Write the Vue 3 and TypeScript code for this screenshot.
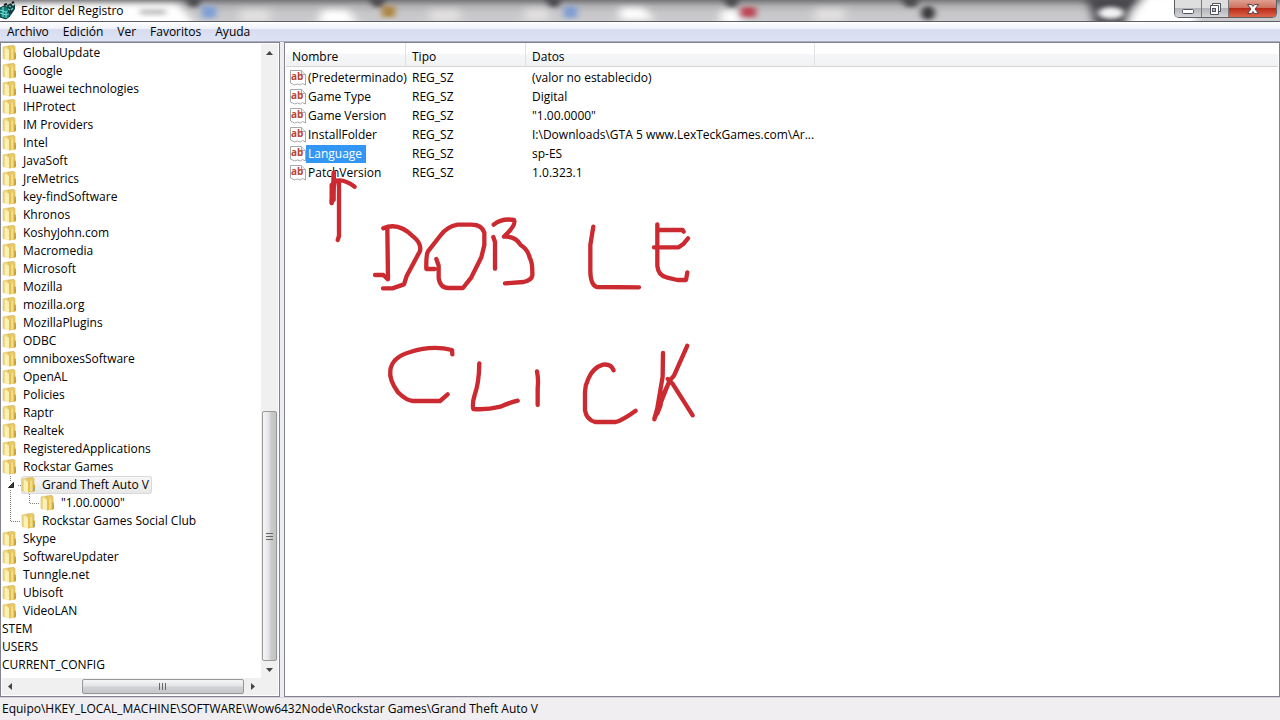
<script setup lang="ts">
import { ref } from 'vue'

interface Node {
  name: string
  kind: 'key' | 'child' | 'grandchild' | 'last' | 'cut'
}

const key = (name: string): Node => ({ name, kind: 'key' })

const nodes: Node[] = [
  ...['GlobalUpdate', 'Google', 'Huawei technologies', 'IHProtect', 'IM Providers', 'Intel', 'JavaSoft',
    'JreMetrics', 'key-findSoftware', 'Khronos', 'KoshyJohn.com', 'Macromedia', 'Microsoft', 'Mozilla',
    'mozilla.org', 'MozillaPlugins', 'ODBC', 'omniboxesSoftware', 'OpenAL', 'Policies', 'Raptr', 'Realtek',
    'RegisteredApplications', 'Rockstar Games'].map(key),
  { name: 'Grand Theft Auto V', kind: 'child' },
  { name: '"1.00.0000"', kind: 'grandchild' },
  { name: 'Rockstar Games Social Club', kind: 'last' },
  ...['Skype', 'SoftwareUpdater', 'Tunngle.net', 'Ubisoft', 'VideoLAN'].map(key),
  { name: 'STEM', kind: 'cut' },
  { name: 'USERS', kind: 'cut' },
  { name: 'CURRENT_CONFIG', kind: 'cut' },
]

const menus = ['Archivo', 'Edición', 'Ver', 'Favoritos', 'Ayuda']

const values = [
  { name: '(Predeterminado)', data: '(valor no establecido)' },
  { name: 'Game Type', data: 'Digital' },
  { name: 'Game Version', data: '"1.00.0000"' },
  { name: 'InstallFolder', data: 'I:\\Downloads\\GTA 5 www.LexTeckGames.com\\Ar...' },
  { name: 'Language', data: 'sp-ES' },
  { name: 'PatchVersion', data: '1.0.323.1' },
]

const openKey = ref('Grand Theft Auto V')
const selected = ref('Language')
</script>

<template>
  <div class="window">
    <header class="titlebar">
      <svg class="glass" viewBox="0 0 1280 21" preserveAspectRatio="none" aria-hidden="true">
        <defs>
          <linearGradient id="glassFill" x1="0" y1="0" x2="0" y2="1">
            <stop offset="0" stop-color="#77777a" />
            <stop offset=".3" stop-color="#b2b2b4" />
            <stop offset=".6" stop-color="#c6c6c8" />
            <stop offset="1" stop-color="#cbcbcd" />
          </linearGradient>
          <filter id="soft" x="-10%" y="-50%" width="120%" height="200%"><feGaussianBlur stdDeviation="5 3" /></filter>
          <filter id="softer" x="-50%" y="-50%" width="200%" height="200%"><feGaussianBlur stdDeviation="3 2" /></filter>
        </defs>
        <rect width="1280" height="21" fill="url(#glassFill)" />
        <g filter="url(#soft)">
          <path d="M-20 4H178L200 30H-20Z" fill="#fff" />
          <path d="M322 10h26l10 14h-40zM620 8h24l10 12h-34zM722 10h14l8 14h-24zM1146-6h50v34h-72z" fill="#fff" />
          <path d="M240 10h30v12h-30zM430 10h30v12h-30zM525 9h24v12h-24zM815 9h30v12h-30z" fill="#e2e0e0" />
          <path d="M1085-4h60l-14 14-4 16h-32l-4-16z" fill="#46464b" />
        </g>
        <g filter="url(#softer)">
          <path d="M184-4h18l-4 11h-8zM368-4h18l-4 11h-8zM544-4h18l-4 11h-8zM722-4h18l-4 11h-8zM900-4h20l-4 11h-10z" fill="#4c4c50" />
          <rect x="202" y="6" width="14" height="12" fill="#7f9fd6" />
          <rect x="382" y="6" width="13" height="11" fill="#ad8540" />
          <rect x="564" y="6" width="13" height="12" fill="#7f9dd2" />
          <rect x="741" y="7" width="15" height="10" fill="#bb4453" />
          <circle cx="928" cy="13" r="7" fill="#39373a" />
          <rect x="140" y="9" width="26" height="6" fill="#c4c4c4" />
          <ellipse cx="1111" cy="13" rx="13" ry="6" fill="#f2f2f4" />
        </g>
      </svg>
      <svg class="app-icon" viewBox="0 0 17 20" aria-hidden="true">
        <path d="M0 8l4-2 6 2v8l-4 3-6-2z" fill="#147c78" stroke="#063b3b" />
        <path d="M0 10l6 2v6M0 13l6 2 4-2M3 7v10M6 12l4-3" fill="none" stroke="#74e0d8" />
        <path d="M7 5l4-2 2 3 2-2v5l-4 6-3-2z" fill="#143f40" />
        <path d="M9 6l2 1M11 10l2-2M8 9l2 1" stroke="#5bd0ca" stroke-width="1.3" />
        <path d="M4 5l3-1M12 3l2-1" stroke="#111" stroke-width="2" />
      </svg>
      <h1>Editor del Registro</h1>
      <div class="controls">
        <button type="button" aria-label="Minimizar">
          <svg viewBox="0 0 16 16"><rect x="2.500" y="8.500" width="11" height="4" rx="1" fill="#fff" stroke="#50535e" /></svg>
        </button>
        <button type="button" aria-label="Restaurar">
          <svg viewBox="0 0 16 16">
            <path d="M5.500 2.500h8v8h-2v3h-8v-9h2z" fill="#fff" stroke="#50535e" />
            <path d="M5 4.500h6.500v6.500" fill="none" stroke="#50535e" />
            <rect x="5.500" y="7.500" width="3" height="3" fill="#bbb" stroke="#50535e" />
          </svg>
        </button>
        <button type="button" class="close" aria-label="Cerrar">
          <svg viewBox="0 0 16 16"><path d="M2.500 3.500h4L8 5.500l1.500-2h4l-3.500 4.500 3.500 4.500h-4L8 10.500l-1.500 2h-4L6 8z" fill="#fff" stroke="#55434a" /></svg>
        </button>
      </div>
    </header>

    <nav class="menubar">
      <button v-for="m in menus" :key="m" type="button">{{ m }}</button>
    </nav>

    <main class="panes">
      <section class="tree-pane">
        <ul class="tree">
          <li v-for="n in nodes" :key="n.name" :class="['node', n.kind]">
            <svg v-if="n.kind === 'child'" class="lines" viewBox="0 0 19 18" aria-hidden="true">
              <path d="M8.500 0v5M8.500 14v4M16 9.500h3" class="dots" />
              <path d="M11.500 6.500v5h-5z" fill="#404040" stroke="#222" />
            </svg>
            <svg v-else-if="n.kind === 'last'" class="lines" viewBox="0 0 19 18" aria-hidden="true">
              <path d="M8.500 0v9.500h10" class="dots" />
            </svg>
            <svg v-else-if="n.kind === 'grandchild'" class="lines deep" viewBox="0 0 38 18" aria-hidden="true">
              <path d="M8.500 0v18M27.500 0v9.500h10" class="dots" />
            </svg>
            <button type="button" :class="{ open: n.name === openKey }" @click="openKey = n.name">
              <svg v-if="n.kind !== 'cut'" class="folder" viewBox="0 0 16 16" aria-hidden="true">
                <path d="M1 2l4-1 2 1v12.500l-6-1z" fill="#eed985" stroke="#d8c069" stroke-width=".6" />
                <path d="M6 1l6-.5 1 1V14l-6 1z" fill="#e8cb66" stroke="#cdab48" stroke-width=".6" />
                <path d="M3 3l4 1.500v11l-4-1.500z" fill="#faf0b8" />
                <path d="M7 4.500l4-1.500v11l-4 1.500z" fill="#e3c04f" />
                <path d="M9 4l2-1v11l-2 1z" fill="#f2dc86" />
                <path d="M12 7l2 1v6l-2 1z" fill="#cfa93f" />
                <path d="M13.500 11v2" stroke="#7fa8a0" />
              </svg>
              <span>{{ n.name }}</span>
            </button>
          </li>
        </ul>
        <div class="vscroll" aria-hidden="true">
          <svg class="arrow" viewBox="0 0 17 17"><path d="M5 11l3.500-4 3.500 4z" /></svg>
          <div class="before"></div>
          <div class="thumb"><i></i><i></i><i></i></div>
          <svg class="arrow" viewBox="0 0 17 17"><path d="M5 7h7l-3.500 4z" /></svg>
        </div>
        <div class="hscroll" aria-hidden="true">
          <svg class="arrow" viewBox="0 0 17 17"><path d="M10 5v7L6 8.500z" /></svg>
          <div class="before"></div>
          <div class="thumb"><i></i><i></i><i></i></div>
          <svg class="arrow" viewBox="0 0 17 17"><path d="M7 5v7l4-3.500z" /></svg>
        </div>
      </section>

      <section class="value-pane">
        <table>
          <colgroup><col class="c1" /><col class="c2" /><col class="c3" /><col /></colgroup>
          <thead>
            <tr><th scope="col">Nombre</th><th scope="col">Tipo</th><th scope="col">Datos</th><td></td></tr>
          </thead>
          <tbody>
            <tr v-for="v in values" :key="v.name" @click="selected = v.name">
              <td class="name">
                <div>
                  <svg viewBox="0 0 16 16" aria-hidden="true">
                    <path d="M.5.5h11l4 4v10.500l-3-1.500-2 1.500-3-1-3 1-4-2z" fill="#fff" stroke="#a8a8a8" />
                    <path d="M11.500.5v4h4" fill="#eee" stroke="#a8a8a8" />
                    <text x="1" y="10">ab</text>
                  </svg>
                  <span :class="{ selected: v.name === selected }">{{ v.name }}</span>
                </div>
              </td>
              <td>REG_SZ</td>
              <td>{{ v.data }}</td>
              <td></td>
            </tr>
          </tbody>
        </table>
        <svg class="ink" viewBox="3 9 1305 1191" role="img" aria-label="Doble click">
          <path d="M161 600l4-12V425M143 489l6-70 1-20M145 465l8-45M150 425q25-12 62 15" />
          <path d="M143 489V435M149 480V398" />
          <g transform="translate(228 480)">
            <path d="M70 85q45-20 90 25 25 20 20 43l-40 75-8 25-35 12H69M82 85l2 153-14-13H45" />
            <path d="M229 177l7 20v37q4 30 30 30h43l25-32 30-60 9-37V98q-8-24-38-24h-42q-32 5-53 34l-36 46q-6 10-5 53h25" />
            <path d="M400 111l5 15v80M401 74q24-20 61-14 8 14-30 50 34-2 50 25 22 14 27 38 9 13 8 53-2 14-26 20l-56 4" />
            <path d="M700 80l-9 55v70q-1 50 19 56l127 1" />
            <path d="M892 73v125q3 30 30 35l30 7h26l4-23M892 90h76l3 5M882 142h74l15-11 13-16" />
            <path d="M277 463l-1-13q-60-15-125 6-55 15-60 55-4 30 23 66 25 25 45 26h81l23-20" />
            <path d="M358 490q-1 60-14 95-8 25-4 42 40 3 82-7 20-10 51-18M531 514q5 25 2 50v51" />
            <path d="M761 511q-8-20-32-17-30 9-44 42-10 20-10 40v55q5 28 30 35h62q20-5 60-34" />
            <path d="M909 459l-1 70-16 95-9 34 45-115 14-16 40-90M883 655l15-46 30-64M923 537l16 16 59 93" />
            <path d="M892 640l10-25" />
          </g>
        </svg>
      </section>
    </main>

    <footer>Equipo\HKEY_LOCAL_MACHINE\SOFTWARE\Wow6432Node\Rockstar Games\Grand Theft Auto V</footer>
  </div>
</template>

<style>
body {
  margin: 0;
}
</style>

<style scoped>
.window {
  display: flex;
  flex-direction: column;
  min-height: 100vh;
  font: 12px/18px "Open Sans", "Noto Sans", sans-serif;
  color: #000;
  background: #f0eef0;
}

button {
  font: inherit;
  color: inherit;
  border: 0;
  padding: 0;
  background: none;
}

.titlebar {
  position: relative;
  display: flex;
  align-items: flex-start;
  height: 21px;
  border-bottom: 1px solid #5c5c66;
  overflow: hidden;
}

.glass {
  position: absolute;
  inset: 0;
  width: 100%;
  height: 100%;
}

.app-icon {
  position: relative;
  width: 17px;
  height: 20px;
}

h1 {
  position: relative;
  flex: 1;
  margin: 0;
  padding: 2px 0 0 4px;
  font-size: 12px;
  font-weight: 400;
}

.controls {
  position: relative;
  display: flex;
  height: 17px;
  margin-right: 3px;
  border: 1px solid #5e5e64;
  border-top: 0;
  border-radius: 0 0 5px 5px;
  overflow: hidden;
}

.controls button {
  display: grid;
  place-items: center;
  width: 27px;
  background: linear-gradient(#dededf 0 50%, #b3b4b9 50%, #d4d5d8);
  border-right: 1px solid #77777d;
}

.controls button.close {
  width: 47px;
  border-right: 0;
  background: linear-gradient(#dfa090, #cf705e 45%, #b92b18 50%, #dd6548);
}

.controls svg {
  width: 16px;
  height: 16px;
}

.menubar {
  display: flex;
  gap: 14px;
  height: 19px;
  padding-left: 7px;
  background: linear-gradient(#fff, #eef1f9 35%, #d7dcef 40%, #dee3f4);
  border-bottom: 1px solid #a9adbf;
}

.panes {
  flex: 1;
  display: flex;
  gap: 4px;
  background: #eeeef2;
}

.tree-pane,
.value-pane {
  border: 1px solid #80838f;
  background: #fff;
}

.tree-pane {
  flex: none;
  display: grid;
  grid-template: 1fr 17px / 1fr 17px;
  box-sizing: border-box;
  width: 280px;
  padding: 1px;
}

.tree {
  margin: 0;
  padding: 0 0 4px;
  list-style: none;
  overflow: hidden;
}

.node {
  display: flex;
  height: 18px;
}

.node button {
  display: flex;
  align-items: center;
  gap: 5px;
  height: 18px;
  padding-right: 3px;
  white-space: nowrap;
}

.node button.open {
  background: linear-gradient(#f8f8f8, #e6e6e6);
  border-radius: 3px;
  box-shadow: inset 0 0 0 1px #dadada;
}

.folder {
  width: 16px;
  height: 16px;
}

.lines {
  width: 19px;
  height: 18px;
}

.lines.deep {
  width: 38px;
}

.dots {
  fill: none;
  stroke: #808080;
  stroke-dasharray: 1 1;
}

.vscroll,
.hscroll {
  display: flex;
  background: #f0f0f1;
}

.vscroll {
  flex-direction: column;
}

.hscroll {
  grid-column: 1 / -1;
  padding-right: 17px;
}

.arrow {
  flex: none;
  width: 17px;
  height: 17px;
  fill: #444;
}

.vscroll .before {
  flex: 351;
}

.hscroll .before {
  flex: 63;
}

.thumb {
  display: flex;
  align-items: center;
  justify-content: center;
  gap: 2px;
  box-sizing: border-box;
  border: 1px solid #989898;
  border-radius: 2px;
}

.vscroll .thumb {
  flex: 248;
  flex-direction: column;
  margin: 0 1px;
  background: linear-gradient(90deg, #f6f6f6, #e3e4e6 45%, #c9cbcf 60%, #c0c2c7);
}

.hscroll .thumb {
  flex: 161;
  margin: 1px 0;
  background: linear-gradient(#f6f6f6, #e3e4e6 45%, #cfd1d4 55%, #c6c8cc);
}

.thumb i {
  background: #666;
}

.vscroll i {
  width: 7px;
  height: 1px;
}

.hscroll i {
  width: 1px;
  height: 7px;
}

.value-pane {
  position: relative;
  flex: 1;
  min-width: 0;
  padding: 0 1px;
}

table {
  width: 100%;
  table-layout: fixed;
  border-collapse: separate;
  border-spacing: 0;
}

.c1,
.c2 {
  width: 120px;
}

.c3 {
  width: 289px;
}

th,
td {
  padding: 0 0 0 6px;
  text-align: left;
  font-weight: 400;
  white-space: nowrap;
}

thead th,
thead td {
  height: 19px;
  padding-top: 4px;
  border-bottom: 1px solid #d5d5d5;
  background: linear-gradient(#fff 45%, #f5f6f7 50%, #f1f2f4);
}

thead th {
  border-right: 1px solid #e0e2e6;
}

tbody::before {
  content: "";
  display: block;
  height: 1px;
}

tbody td {
  height: 19px;
}

tbody td.name {
  padding-left: 4px;
}

.name div {
  display: flex;
  align-items: center;
}

.name svg {
  flex: none;
  width: 16px;
  height: 16px;
}

.name text {
  font: bold 10px "Open Sans", sans-serif;
  fill: #b8452f;
}

.name span {
  padding: 0 4px 0 2px;
}

.name .selected {
  color: #fff;
  background: #3296f5;
}

.ink {
  position: absolute;
  left: 0;
  top: 0;
  width: 435px;
  height: 397px;
  pointer-events: none;
}

.ink path {
  fill: none;
  stroke: #cb2a30;
  stroke-width: 13;
  stroke-linecap: round;
  stroke-linejoin: round;
}

footer {
  height: 20px;
  padding: 1px 2px;
  border-top: 1px solid #d8d4d8;
  line-height: 20px;
  white-space: nowrap;
}
</style>
